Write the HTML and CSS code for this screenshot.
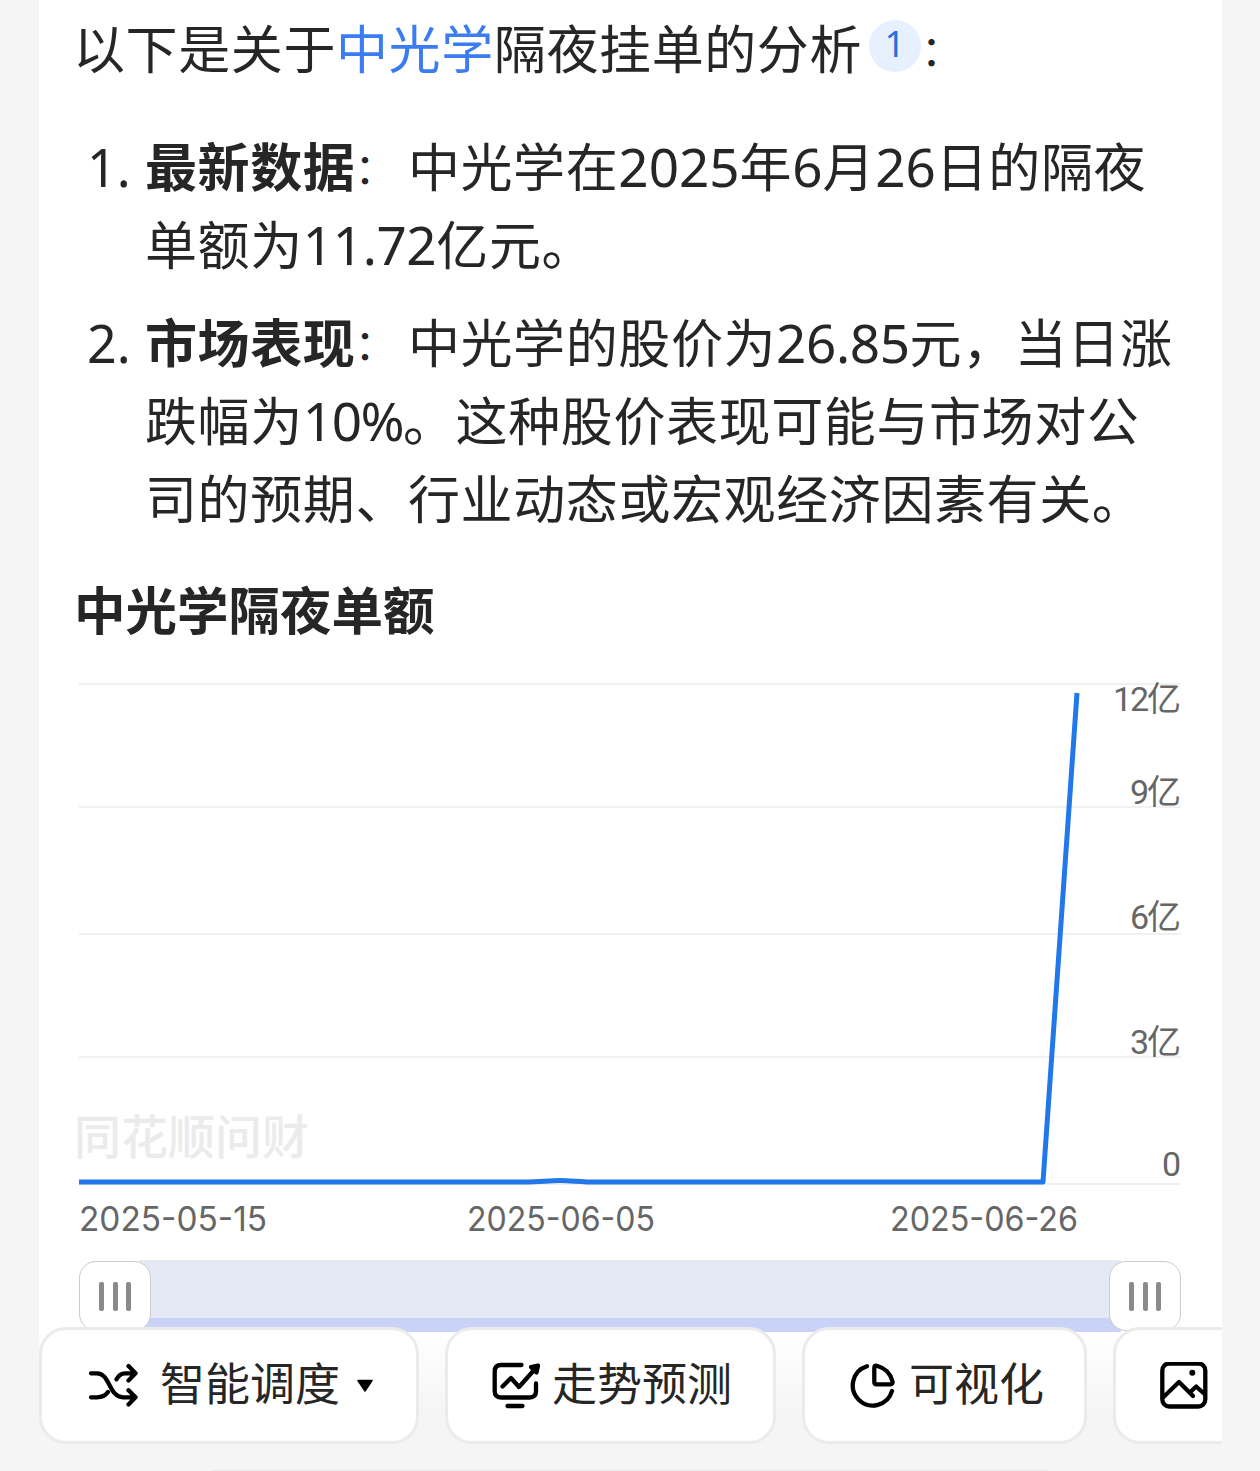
FILE: index.html
```html
<!DOCTYPE html>
<html lang="zh-CN">
<head>
    <meta charset="UTF-8">
    <meta name="viewport" content="width=device-width, initial-scale=1.0">
    <title>中光学隔夜挂单</title>
    <link rel="stylesheet" href="styles.css">
</head>
<body>

<div class="page">
    <div class="answer">
        <p class="intro">以下是关于<a class="stock">中光学</a>隔夜挂单的分析<span class="ref">1</span><span class="colon">：</span></p>

        <ol class="points">
            <li>
                <span class="marker">1.</span>
                <div><b>最新数据</b><span class="colon">：</span>中光学在<span class="num">2025</span>年<span class="num">6</span>月<span class="num">26</span>日的隔夜<br>单额为<span class="num dec">11.72</span>亿元。</div>
            </li>
            <li>
                <span class="marker">2.</span>
                <div><b>市场表现</b><span class="colon">：</span>中光学的股价为<span class="num dec">26.85</span>元，当日涨<br>跌幅为<span class="num pct">10%</span>。这种股价表现可能与市场对公<br>司的预期、行业动态或宏观经济因素有关。</div>
            </li>
        </ol>

        <h2 class="title">中光学隔夜单额</h2>
    </div>

    <svg class="chart" width="1183" height="590" viewBox="39 670 1183 590">
        <g class="grid">
            <path d="M79 684H1181M79 807H1181M79 934H1181M79 1057H1181M79 1184H1181"/>
        </g>
        <text class="watermark" x="74" y="1154" textLength="235">同花顺问财</text>
        <path class="line" d="M79 1182H525C540 1182 548 1180.5 560 1180.5S580 1182 597 1182H1043L1077 693"/>
        <g class="axis">
            <text x="1113" y="711" textLength="68">12亿</text>
            <text x="1130" y="804" textLength="51">9亿</text>
            <text x="1130" y="929" textLength="51">6亿</text>
            <text x="1130" y="1054" textLength="51">3亿</text>
            <text x="1162" y="1176">0</text>
        </g>
        <g class="axis dates">
            <text x="79" y="1231" textLength="188" lengthAdjust="spacingAndGlyphs">2025-05-15</text>
            <text x="467" y="1231" textLength="188" lengthAdjust="spacingAndGlyphs">2025-06-05</text>
            <text x="890" y="1231" textLength="188" lengthAdjust="spacingAndGlyphs">2025-06-26</text>
        </g>
    </svg>

    <div class="slider">
        <div class="handle"><i></i><i></i><i></i></div>
        <div class="track"></div>
        <div class="handle"><i></i><i></i><i></i></div>
    </div>

    <div class="tools">
        <div class="chip chip-mode">
            <svg class="icon" width="50" height="48" viewBox="88 1362 50 48">
                <path d="M91 1373.3H97C110 1373.3 109 1397.3 123 1397.3H135M128.5 1390.3L135.5 1397.3L128.5 1404.5M116.5 1379.3C118.5 1375.5 121 1373.3 125 1373.3H135M128.5 1366L135.5 1373.3L128.5 1380.5M91 1397.3H97C102 1397.3 105.5 1395.5 108 1392"/>
            </svg>
            <span>智能调度</span>
            <svg class="caret" width="18" height="14" viewBox="0 0 18 14"><path d="M2 1.5H16L9 12Z"/></svg>
        </div>
        <div class="chip chip-trend">
            <svg class="icon" width="50" height="48" viewBox="491 1362 50 48">
                <path d="M521.5 1365H501Q494.7 1365 494.7 1371.5V1391Q494.7 1397.5 501 1397.5H529.5Q536 1397.5 536 1391V1383.5M502.5 1386.5L511 1378L519 1387L535 1369M507.5 1406H522.5"/>
                <path class="solid" d="M538 1365.5L531 1367L536.5 1372.5Z"/>
            </svg>
            <span>走势预测</span>
        </div>
        <div class="chip chip-visual">
            <svg class="icon" width="50" height="48" viewBox="848 1362 50 48">
                <path d="M867 1366.3A20 20 0 1 0 892 1391M874.3 1368V1382Q874.3 1384.3 876.6 1384.3H890.5Q893 1384.3 892.5 1381.5C890.5 1373 885 1368 876.8 1365.7Q874.3 1365 874.3 1368Z"/>
            </svg>
            <span>可视化</span>
        </div>
        <div class="chip chip-image">
            <svg class="icon" width="50" height="48" viewBox="1159 1362 50 48">
                <rect x="1162.3" y="1363.5" width="43" height="43" rx="7"/>
                <path d="M1163 1397.5L1179 1382L1193 1396M1189.7 1392.5L1196.2 1386.5L1204.5 1394"/>
                <circle class="dot" cx="1192.3" cy="1372.7" r="3"/>
            </svg>
        </div>
    </div>
</div>

<div class="input-edge"></div>

</body>
</html>
```
FILE: styles.css
```css
* {
    box-sizing: border-box;
}
body {
    margin: 0;
    height: 1471px;
    overflow: hidden;
    background-color: #f5f5f5;
    color: #262626;
    font-family: "Noto Sans CJK SC", sans-serif;
}
.page {
    display: flex;
    flex-direction: column;
    width: 1183px;
    height: 1444px;
    margin-left: 39px;
    overflow: hidden;
    background-color: #fff;
}
.answer {
    height: 670px;
    padding: 8px 0 0 34px;
    font-size: 52px;
    line-height: 78px;
    letter-spacing: 0.6px;
    white-space: nowrap;
}
.intro {
    display: flex;
    margin: 0 0 40px;
}
.stock {
    color: #3b7cf0;
}
.ref {
    width: 52px;
    height: 52px;
    margin: 12px 0 0 7px;
    border-radius: 50%;
    background-color: #e6f0ff;
    color: #276fe0;
    font-family: "Noto Sans", sans-serif;
    font-size: 36px;
    line-height: 48px;
    text-align: center;
}
.colon {
    display: inline-block;
    width: 53.5px;
    margin-left: -1px;
    font-size: 42px;
    line-height: 1;
    vertical-align: 3px;
}
.intro .colon {
    margin: 19px 0 0;
}
.points {
    display: flex;
    flex-direction: column;
    gap: 20px;
    margin: 0 0 33px;
    padding: 0 0 0 2px;
    list-style: none;
}
.points li {
    display: flex;
    align-items: baseline;
    height: 156px;
}
.points li + li {
    height: 234px;
}
.marker {
    width: 70px;
    padding-left: 12px;
    font-family: "Noto Sans", sans-serif;
    letter-spacing: 0;
}
.num {
    font-family: "Noto Sans", sans-serif;
    font-size: 53px;
    line-height: 1;
    letter-spacing: 0;
}
.dec {
    letter-spacing: -0.4px;
}
.pct {
    letter-spacing: -1.5px;
}
.title {
    margin: 0;
    padding-left: 1px;
    font-size: 51.5px;
    font-weight: 700;
    letter-spacing: 0;
}

/* chart */
.chart {
    display: block;
    flex: none;
}
.grid path {
    stroke: #f1f1f1;
    stroke-width: 2;
}
.line {
    fill: none;
    stroke: #2277e9;
    stroke-width: 5;
    stroke-linejoin: round;
}
.watermark {
    fill: #ebebeb;
    font-size: 47px;
    font-weight: 500;
}
.axis {
    fill: #666;
    font-family: Roboto, "Noto Sans CJK SC", sans-serif;
    font-size: 34px;
}
.dates {
    font-family: Inter, sans-serif;
}

/* range slider */
.slider {
    display: flex;
    flex: none;
    height: 72px;
    padding: 0 41px 0 40px;
}
.track {
    flex: 1;
    margin: 0 -12px;
    background-color: #e5e9f5;
    border-bottom: 14px solid #c8d3f7;
}
.handle {
    display: flex;
    z-index: 1;
    justify-content: center;
    align-items: center;
    gap: 8.5px;
    width: 72px;
    height: 70px;
    margin-top: 1px;
    border: 1px solid #ccc;
    border-radius: 17px;
    background-color: #fff;
}
.handle i {
    width: 5px;
    height: 29px;
    border-radius: 2px;
    background-color: #8a8a8a;
}

/* shortcuts */
.tools {
    display: flex;
    z-index: 2;
    flex: none;
    gap: 26px;
    height: 117px;
    margin-top: -5px;
    background: linear-gradient(transparent 5px, #fff 5px, #f5f5f5 85px);
}
.chip {
    display: flex;
    flex: none;
    align-items: center;
    height: 117px;
    padding-left: 43px;
    border: 3px solid #ebebeb;
    border-radius: 27px;
    background-color: #fff;
    font-size: 45px;
    line-height: 60px;
    white-space: nowrap;
}
.chip span {
    margin-top: -7px;
}
.chip-mode {
    width: 380px;
    padding-left: 46px;
}
.chip-mode span {
    margin-left: 22px;
}
.chip-trend {
    width: 331px;
}
.chip-trend span {
    margin-left: 11px;
}
.chip-visual {
    width: 285px;
}
.chip-visual span {
    margin-left: 11px;
}
.chip-image {
    width: 331px;
}
.icon {
    fill: none;
    stroke: #000;
    stroke-width: 4.3;
    stroke-linecap: round;
    stroke-linejoin: round;
}
.icon .solid {
    fill: #000;
}
.icon .dot {
    fill: #000;
    stroke: none;
}
.caret {
    margin-left: 16px;
    stroke: #000;
    stroke-width: 1.5;
    stroke-linejoin: round;
}
.input-edge {
    width: 836px;
    height: 1px;
    margin: 26px 0 0 212px;
    background-color: #e8e8e8;
}
```
